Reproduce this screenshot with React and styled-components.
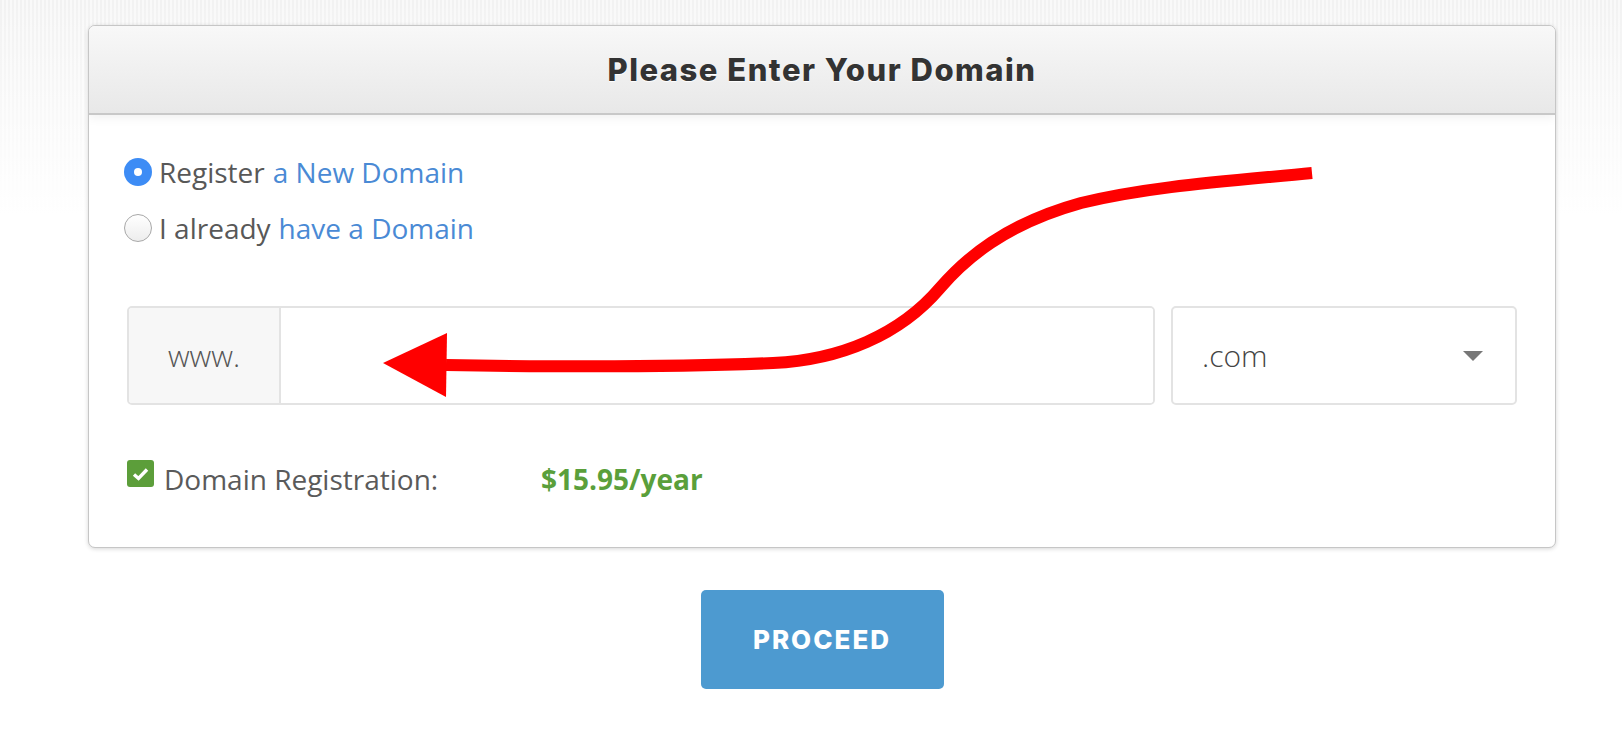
import React from 'react';
import styled, { createGlobalStyle } from 'styled-components';

const GlobalStyle = createGlobalStyle`
  html, body { margin: 0; padding: 0; }
  body {
    background-color: #fff;
    background-image:
      linear-gradient(to bottom, rgba(255,255,255,0) 0px, #ffffff 215px),
      repeating-linear-gradient(90deg, #f2f2f2 0px, #f2f2f2 2px, #f9f9f9 2px, #f9f9f9 4px);
    background-repeat: no-repeat;
    background-size: 100% 220px;
    font-family: "Open Sans", "Noto Sans", sans-serif;
  }
  * { box-sizing: border-box; }
`;

const Page = styled.div`
  position: relative;
  width: 1622px;
  min-height: 732px;
  padding: 25px 66px 0 88px;
`;

const Card = styled.section`
  width: 1468px;
  background: #fff;
  border: 1px solid #c6c6c6;
  border-radius: 7px;
  box-shadow: 0 1px 4px rgba(0, 0, 0, 0.16);
  overflow: hidden;
`;

const Header = styled.header`
  position: relative;
  box-sizing: content-box;
  height: 87px;
  border-bottom: 2px solid #c8c8c8;
  background: linear-gradient(to bottom, #f8f8f8, #e8e8e8);
  box-shadow: 0 3px 10px rgba(0, 0, 0, 0.06);
  display: flex;
  align-items: center;
  justify-content: center;
  font-family: Inter, "Noto Sans", sans-serif;
  font-weight: 800;
  font-size: 31px;
  letter-spacing: 1.5px;
  color: #333;
  text-shadow: 0 1px 1px #fff;
`;

const Body = styled.div`
  padding: 29px 38px 48px 38px;
`;

const RadioList = styled.div`
  display: flex;
  flex-direction: column;
  margin-left: -3px;
`;

const RadioRow = styled.label`
  display: flex;
  align-items: center;
  height: 56px;
  font-size: 28px;
  color: #585858;
`;

const RadioDot = styled.span`
  width: 28px;
  height: 28px;
  border-radius: 50%;
  margin-right: 7px;
  flex: none;
  display: flex;
  align-items: center;
  justify-content: center;
  background: ${p => (p.$checked ? '#3d8cf5' : 'linear-gradient(#ffffff, #ededed)')};
  border: ${p => (p.$checked ? 'none' : '1.5px solid #a8a8a8')};
  &::after {
    content: '';
    display: ${p => (p.$checked ? 'block' : 'none')};
    width: 8px;
    height: 8px;
    border-radius: 50%;
    background: #fff;
  }
`;

const Link = styled.span`
  color: #4a8ad5;
  margin-left: 8px;
`;

const InputRow = styled.div`
  display: flex;
  gap: 16px;
  height: 99px;
  margin-top: 50px;
`;

const Group = styled.div`
  flex: 1;
  display: flex;
  border: 2px solid #e3e3e3;
  border-radius: 5px;
  overflow: hidden;
`;

const Addon = styled.div`
  width: 152px;
  background: #f7f7f7;
  border-right: 2px solid #e3e3e3;
  display: flex;
  align-items: center;
  justify-content: center;
  font-size: 30px;
  font-weight: 300;
  color: #555;
`;

const Field = styled.input`
  flex: 1;
  border: none;
  outline: none;
  background: #fff;
  font-family: "Open Sans", sans-serif;
  font-size: 30px;
  padding: 0 20px;
`;

const Select = styled.div`
  width: 346px;
  border: 2px solid #e3e3e3;
  border-radius: 5px;
  display: flex;
  align-items: center;
  justify-content: space-between;
  padding: 0 32px 0 29px;
  font-size: 30px;
  font-weight: 300;
  color: #444;
`;

const Caret = styled.span`
  width: 0;
  height: 0;
  border-left: 10px solid transparent;
  border-right: 10px solid transparent;
  border-top: 10px solid #777;
`;

const CheckRow = styled.div`
  display: flex;
  align-items: center;
  height: 40px;
  margin-top: 54px;
  font-size: 28px;
  color: #5a5a5a;
`;

const CheckBox = styled.span`
  width: 27px;
  height: 27px;
  border-radius: 3px;
  background: #5c9e3a;
  align-self: flex-start;
  margin-top: 1px;
  display: flex;
  align-items: center;
  justify-content: center;
`;

const CheckLabel = styled.span`
  width: 377px;
  margin-left: 10px;
`;

const Price = styled.span`
  font-weight: 700;
  color: #5a9f3b;
`;

const ButtonRow = styled.div`
  width: 1468px;
  display: flex;
  justify-content: center;
  margin-top: 42px;
`;

const Button = styled.button`
  width: 243px;
  height: 99px;
  border: none;
  border-radius: 5px;
  background: #4d9ad0;
  color: #fff;
  font-family: Inter, "Noto Sans", sans-serif;
  font-weight: 800;
  font-size: 26px;
  letter-spacing: 2px;
  cursor: pointer;
`;

const Annotation = styled.svg`
  position: absolute;
  left: 0;
  top: 0;
  pointer-events: none;
`;

export default function App() {
  return (
    <>
      <GlobalStyle />
      <Page>
        <Card>
          <Header>Please Enter Your Domain</Header>
          <Body>
            <RadioList>
              <RadioRow>
                <RadioDot $checked />
                Register<Link>a New Domain</Link>
              </RadioRow>
              <RadioRow>
                <RadioDot />
                I already<Link>have a Domain</Link>
              </RadioRow>
            </RadioList>
            <InputRow>
              <Group>
                <Addon>www.</Addon>
                <Field type="text" />
              </Group>
              <Select>
                <span>.com</span>
                <Caret />
              </Select>
            </InputRow>
            <CheckRow>
              <CheckBox>
                <svg width="17" height="14" viewBox="0 0 17 14">
                  <path d="M2 7.5 L6.5 11.5 L15 2.5" fill="none" stroke="#fff" strokeWidth="3.4" />
                </svg>
              </CheckBox>
              <CheckLabel>Domain Registration:</CheckLabel>
              <Price>$15.95/year</Price>
            </CheckRow>
          </Body>
        </Card>
        <ButtonRow>
          <Button>PROCEED</Button>
        </ButtonRow>
        <Annotation width="1622" height="732" viewBox="0 0 1622 732">
          <path
            d="M446 365 C 560 367, 680 367, 773 363 C 840 360, 900 335, 940 288 C 965 259, 1005 224, 1081 203 C 1150 186, 1230 181, 1312 173"
            fill="none"
            stroke="#ff0000"
            strokeWidth="12"
          />
          <polygon points="383,363 447,333 446,397" fill="#ff0000" />
        </Annotation>
      </Page>
    </>
  );
}
